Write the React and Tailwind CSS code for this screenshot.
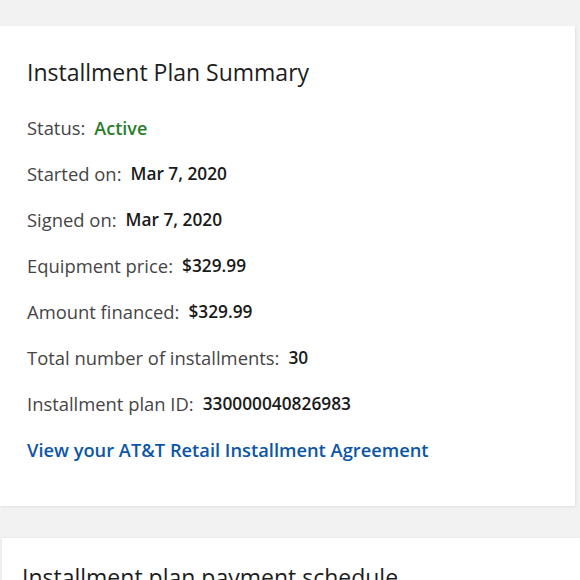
import React from "react";

const rows = [
  ["Started on:", "Mar 7, 2020"],
  ["Signed on:", "Mar 7, 2020"],
  ["Equipment price:", "$329.99"],
  ["Amount financed:", "$329.99"],
  ["Total number of installments:", "30"],
  ["Installment plan ID:", "330000040826983"],
];

export default function App() {
  return (
    <div
      className="w-[580px] h-[580px] overflow-hidden bg-[#f2f2f2]"
      style={{ fontFamily: '"Open Sans", "Noto Sans", sans-serif' }}
    >
      <div className="pt-[26px]">
        <div className="w-[575px] bg-white shadow-[1px_1px_2px_rgba(0,0,0,0.08)] pt-[23px] pb-[33px] pl-[27px]">
          <div className="h-[46px] flex items-center text-[23px] text-[#1d1d1d]">
            Installment Plan Summary
          </div>
          <div className="h-[10px]" />
          <div className="h-[46px] flex items-center">
            <span className="text-[18.4px] text-[#454545]">Status:</span>
            <span className="ml-[9px] text-[18px] text-[#2a7d2a] font-semibold">Active</span>
          </div>
          {rows.map(([k, v]) => (
            <div key={k} className="h-[46px] flex items-center">
              <span className="text-[18.4px] text-[#454545]">{k}</span>
              <span className="ml-[9px] text-[17.3px] text-[#1a1a1a] font-semibold">{v}</span>
            </div>
          ))}
          <div className="h-[46px] flex items-center text-[18.3px] text-[#0c56a8] font-semibold">
            View your AT&amp;T Retail Installment Agreement
          </div>
        </div>
      </div>
      <div className="mt-[32px] ml-[2px] bg-white shadow-[0_0_2px_rgba(0,0,0,0.08)] pt-[22px] pl-[20px] h-[80px]">
        <div className="text-[23px] text-[#1d1d1d]">
          Installment plan payment schedule
        </div>
      </div>
    </div>
  );
}
